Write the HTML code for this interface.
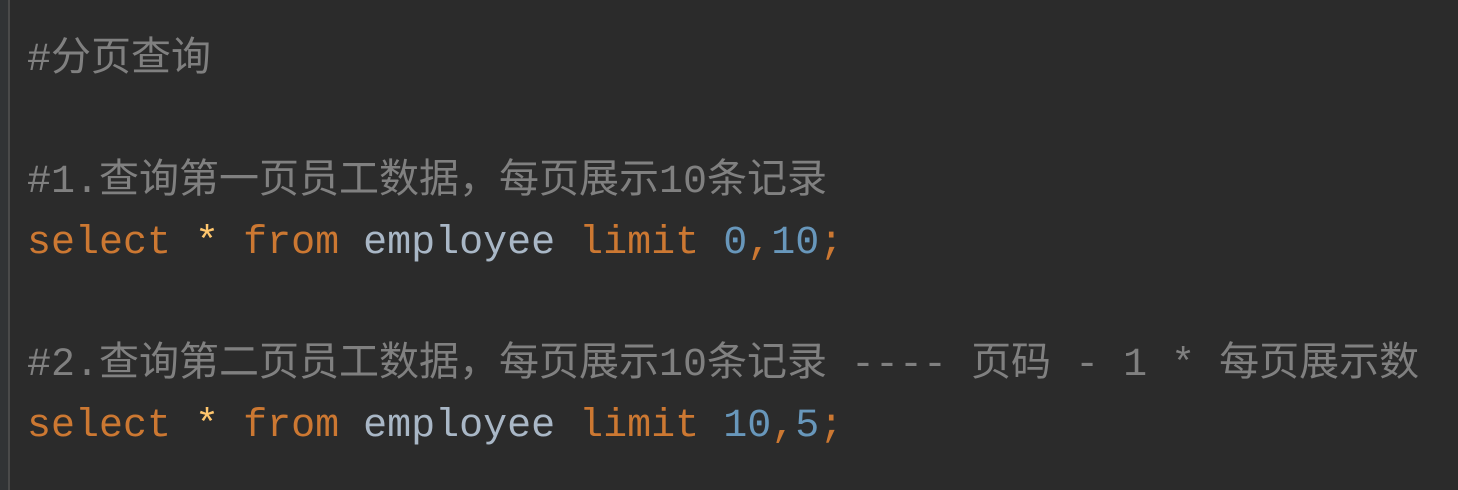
<!DOCTYPE html>
<html><head><meta charset="utf-8"><style>
html,body{margin:0;padding:0;width:1458px;height:490px;overflow:hidden;}
body{background:#2b2b2b;position:relative;}
.gut{position:absolute;left:0;top:0;width:8px;height:490px;background:#313335;}
.ln{position:absolute;left:8px;top:0;width:2px;height:490px;background:#4a4a4a;}
.code{position:absolute;left:27px;top:27px;font-family:"Liberation Mono","Noto Sans CJK SC",monospace;font-size:40px;line-height:61px;color:#a9b7c6;}
.l{height:61px;white-space:pre;position:relative;}
.c{color:#808080;top:-4px;}
.q{top:3px;}
.k{color:#cc7832;}
.s{color:#ffc66d;}
.n{color:#6897bb;}
.z{font-family:"Noto Sans CJK SC",sans-serif;}
</style></head><body>
<div class="gut"></div><div class="ln"></div>
<div class="code"><div class="l c">#<span class="z">分页查询</span></div><div class="l"></div><div class="l c">#1.<span class="z">查询第一页员工数据，每页展示</span>10<span class="z">条记录</span></div><div class="l q"><span class="k">select</span> <span class="s">*</span> <span class="k">from</span> employee <span class="k">limit</span> <span class="n">0</span><span class="k">,</span><span class="n">10</span><span class="k">;</span></div><div class="l"></div><div class="l c">#2.<span class="z">查询第二页员工数据，每页展示</span>10<span class="z">条记录</span> ---- <span class="z">页码</span> - 1 * <span class="z">每页展示数</span></div><div class="l q"><span class="k">select</span> <span class="s">*</span> <span class="k">from</span> employee <span class="k">limit</span> <span class="n">10</span><span class="k">,</span><span class="n">5</span><span class="k">;</span></div></div>
</body></html>
